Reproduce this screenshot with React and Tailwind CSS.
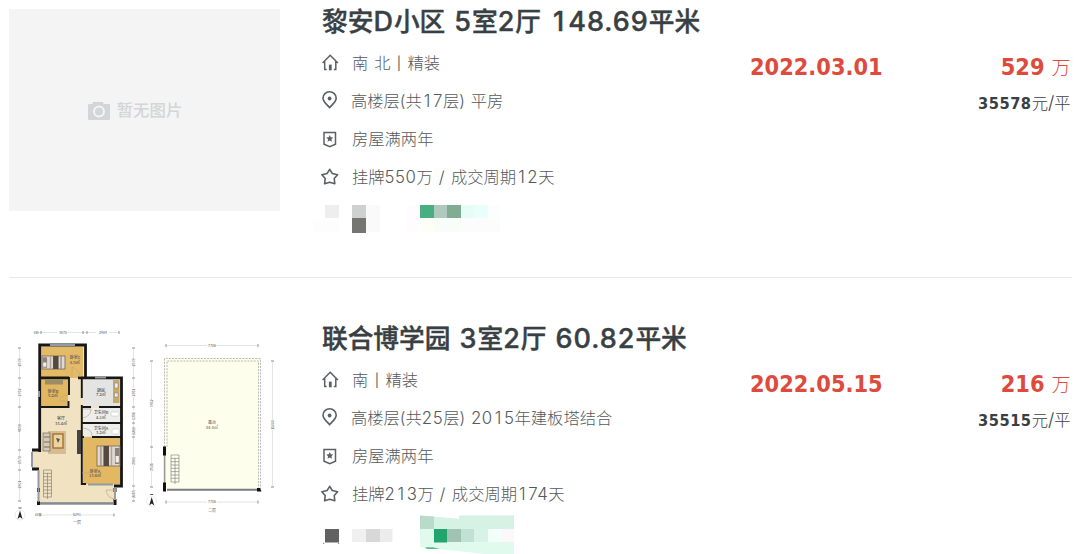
const HomeIcon = () => (
  <svg viewBox="0 0 17 17" className="-mt-[2px] h-[17px] w-[17px]" fill="none" stroke="#5a6165" strokeWidth="1.5">
    <path d="M0.6 9 8.2 1.2 15.900 9M2.700 7.500V15.600H4.700M13.800 7.500V15.600H11.800" />
    <path d="M8.300 10.600V16.300" strokeWidth="2.800" />
  </svg>
);

const PinIcon = () => (
  <svg viewBox="0 0 17 18" className="-mt-[2px] h-[18px] w-[17px]" fill="none" stroke="#5a6165" strokeWidth="1.6">
    <path d="M7.600 16.600C4.300 13 1 10.600 1 7.200a6.600 6.400 0 0 1 13.200 0C14.200 10.600 10.900 13 7.600 16.600Z" />
    <circle cx="7.600" cy="7.500" r="1.900" fill="#5a6165" stroke="none" />
  </svg>
);

const BadgeIcon = () => (
  <svg viewBox="0 0 17 17" className="h-[17px] w-[17px]" fill="none" stroke="#5a6165" strokeWidth="1.5">
    <path d="M2 1.500H13.500V13.200L7.750 15.700 2 13.200Z" />
    <path d="m7.750 4 1.050 2.300 2.500.3-1.850 1.700.5 2.500-2.200-1.250-2.200 1.250.5-2.500-1.850-1.700 2.500-.3Z" fill="#5a6165" stroke="none" />
  </svg>
);

const StarIcon = () => (
  <svg viewBox="0 0 18 17" className="-ml-px -mt-px h-[17px] w-[18px]" fill="none" stroke="#5a6165" strokeWidth="1.6" strokeLinejoin="round">
    <path d="M8.700 1.300 11.300 5.500 16.600 6.700 13.200 10.500 13.800 15.700 8.700 14.200 3.600 15.700 4.200 10.500 0.900 6.700 6.100 5.500Z" />
  </svg>
);

const icons = [HomeIcon, PinIcon, BadgeIcon, StarIcon];

const Placeholder = () => (
  <div className="flex h-[202px] w-[271px] shrink-0 items-center justify-center gap-[7px] bg-[#f4f4f4] pr-[19px] pt-px text-[#d3d6d6]">
    <svg viewBox="0 0 22 18" className="h-[18px] w-[22px]">
      <path d="M0 3Q0 2 1 2H4.500V0.800Q4.500 0 5.300 0H14.700Q15.500 0 15.500 0.800V2H21Q22 2 22 3V17Q22 18 21 18H1Q0 18 0 17Z" fill="currentColor" />
      <circle cx="11" cy="9.500" r="5" fill="none" stroke="#f4f4f4" strokeWidth="2" />
    </svg>
    <span className="text-[16.400px] font-medium leading-none">暂无图片</span>
  </div>
);

const Dim = ({ x, y, children, r = 0, size = 4 }) => (
  <text x={x} y={y} fontSize={size} textAnchor="middle" fill="#555" transform={r ? `rotate(${r} ${x} ${y})` : undefined}>
    {children}
  </text>
);

const Compass = ({ x, y }) => (
  <g transform={`translate(${x} ${y})`}>
    <circle r="5" fill="none" stroke="#d8d8d8" strokeWidth=".5" />
    <path d="M0-4.500 2.500 4 0 2-2.500 4Z" fill="#222" />
    <path d="M-1.500-7H1.500" stroke="#555" />
  </g>
);

const Stairs = ({ x, y }) => (
  <g transform={`translate(${x} ${y})`} fill="none" stroke="#777" strokeWidth=".6">
    <path d="M0 0H8V27H0ZM0 3.400H8M0 6.700H8M0 10H8M0 13.300H8M0 16.600H8M0 20H8M0 23.300H8M4 3V29" />
  </g>
);

const Bed = ({ x, y, w, h, flip }) => (
  <g transform={flip ? `translate(${x + w} ${y}) scale(-1 1)` : `translate(${x} ${y})`}>
    <rect width={w} height={h} fill="#ded9d5" stroke="#675548" strokeWidth=".7" />
    <rect x={w * 0.02} y={h * 0.1} width={w * 0.2} height={h * 0.8} fill="#8d8178" />
    <rect x={w * 0.05} y={h * 0.5} width={w * 0.14} height={h * 0.32} fill="#f1efec" />
    <rect x={w * 0.48} width={w * 0.24} height={h} fill="#54483f" />
    <rect x={w * 0.34} width={w * 0.06} height={h} fill="#b0a294" />
    <rect x={w * 0.8} width={w * 0.06} height={h} fill="#a08f82" />
  </g>
);

const FloorPlan = () => (
  <svg viewBox="9 326 271 202" className="h-[202px] w-[271px] shrink-0 font-['Noto_Sans_CJK_SC',sans-serif]">
    <path d="M39 345H84V379H121V485H115V502H38V470H32V450H39Z" fill="#f1e3c2" />
    <rect x="41" y="347" width="42" height="31" fill="#e3ba66" />
    <rect x="41" y="379" width="27" height="27" fill="#e1b762" />
    <rect x="83" y="379" width="37" height="27" fill="#e4e4e3" />
    <rect x="83" y="408" width="37" height="28" fill="#ededeb" />
    <rect x="83" y="437" width="37" height="47" fill="#e2b863" />
    <g fill="none" stroke="#171717" strokeWidth="2.800">
      <path d="M39.700 452V345H85.500V378M39 377.800H69M78 377.800H121.500V486H114" />
      <path d="M69 377V395M68.500 401V407H41M81.800 377V398M81.800 405V437.500M81.800 407H91M99 407H121M81.800 423H121M82 437H84M92 437H121M81.800 437V484H86" strokeWidth="1.900" />
      <path d="M39.700 450H32M32 469H39M38.500 488V492M38.500 501V505M115 488V492M115 499V505" strokeWidth="3" />
    </g>
    <path d="M50 345H75M95 377.500H106M39 391V397M32 452V467M38.500 470V502M40 503H113M115 488V500M88 484.500H113" fill="none" stroke="#919ca1" strokeWidth="2" />
    <path d="M40 504.200H113" stroke="#555" strokeWidth=".7" />
    <path d="M72 377V367Q79 369 80 377M68 395Q61 395 60 401H68M83 409H91Q91 416 83 418M83 428Q92 429 92 436M82 473H89M106 490H115V499Q107 498 106 490" fill="none" stroke="#baab89" strokeWidth=".7" />
    <Bed x={42} y={356} w={23} h={13} />
    <Bed x={97} y={446} w={23} h={20} flip />
    <rect x="45" y="379.500" width="18" height="5" fill="#9c8d67" />
    <rect x="113" y="380" width="6.500" height="23" fill="#c9a968" />
    <path d="M114.500 383h3.500v5h-3.500zM114.500 393h3.500v4h-3.500z" fill="#eee" stroke="#777" strokeWidth=".5" />
    <rect x="77" y="430" width="4" height="24" fill="#444" />
    <rect x="48" y="431" width="18" height="23" fill="#d5bc95" />
    <rect x="43" y="433" width="7" height="18" fill="#d5cab4" stroke="#756652" strokeWidth=".7" />
    <path d="M44 437H50M44 442H50M44 447H50" stroke="#5f5548" strokeWidth=".8" />
    <rect x="53" y="434" width="10" height="14" fill="#ead5a0" stroke="#a6712f" strokeWidth="1.400" />
    <path d="m56 438 4 1-2 4Z" fill="#555" />
    <rect x="111" y="412" width="8" height="4" rx="1" fill="#fff" stroke="#bbb" strokeWidth=".5" />
    <rect x="112" y="429" width="7" height="5" rx="1.500" fill="#fff" stroke="#bbb" strokeWidth=".5" />
    <Stairs x="43.500" y="470" />
    <g fontWeight="500">
      <Dim x="75" y="359">卧室C</Dim><Dim x="75" y="363.500">8.5㎡</Dim>
      <Dim x="53" y="392.500">卧室B</Dim><Dim x="53" y="397">5.2㎡</Dim>
      <Dim x="101" y="391.500">厨房</Dim><Dim x="101" y="396">7.2㎡</Dim>
      <Dim x="61" y="420">客厅</Dim><Dim x="61" y="424.500">33.4㎡</Dim>
      <Dim x="101" y="414">卫生间B</Dim><Dim x="101" y="418.500">4.1㎡</Dim>
      <Dim x="101" y="429.500">卫生间A</Dim><Dim x="101" y="434">3.2㎡</Dim>
      <Dim x="95" y="472.500">卧室A</Dim><Dim x="95" y="477">13.6㎡</Dim>
    </g>
    <path d="M36 332.500H57M68 332.500H96M109 332.500H119M19.500 348V359M19.500 366V388M19.500 397V424M19.500 432V457M19.500 463V481M19.500 488V501M133.500 348V359M133.500 366V388M133.500 397V411M133.500 420V457M133.500 465V490M133.500 496V501M36 515H73M81 515H114" stroke="#d2d2d2" strokeWidth=".6" />
    <path d="M41 331v3M83 331v3M87 331v3M119 331v3M18 348h3M18 378h3M18 407h3M18 450h3M18 470h3M18 501h3M132 348h3M132 378h3M132 407h3M132 423h3M132 437h3M132 486h3M132 501h3M40 513.500v3M114 513.500v3" stroke="#777" strokeWidth=".8" />
    <Dim x="36" y="333.800" size="3">550</Dim><Dim x="63" y="333.800" size="3.500">3675</Dim><Dim x="103" y="333.800" size="3.500">2984</Dim>
    <Dim x="20.500" y="362.500" r={-90} size="3.500">2578</Dim><Dim x="20.500" y="392.500" r={-90} size="3.500">2762</Dim><Dim x="20.500" y="428" r={-90} size="3.500">4658</Dim><Dim x="20.500" y="460" r={-90} size="3.500">1570</Dim><Dim x="20.500" y="484.500" r={-90} size="3.500">2801</Dim>
    <Dim x="134.500" y="362.500" r={-90} size="3.500">2578</Dim><Dim x="134.500" y="392.500" r={-90} size="3.500">2361</Dim><Dim x="134.500" y="416" r={-90} size="3.500">1396</Dim><Dim x="134.500" y="431" r={-90} size="3.500">1211</Dim><Dim x="134.500" y="461" r={-90} size="3.500">3981</Dim><Dim x="134.500" y="494" r={-90} size="3.500">2065</Dim>
    <Dim x="38" y="516.200" size="3">1570</Dim><Dim x="77" y="516.200" size="3.500">6291</Dim>
    <Dim x="77" y="524">一层</Dim>
    <Compass x={20} y={515} />

    <rect x="164" y="357" width="96" height="133" fill="#fefeec" />
    <path d="M164.500 447V358.500H260.500V489M167 447V361H258.500V489" fill="none" stroke="#a9a9a9" strokeWidth=".8" strokeDasharray="2 1.200" />
    <path d="M167 489.800H258" stroke="#777d80" strokeWidth="2" />
    <path d="M164.600 455V483" stroke="#999" strokeWidth="1.600" />
    <path d="M163 446.500h3v9h-3zM163 482.500h3v9h-3zM257 488h3l1.500 3.500h-4.500z" fill="#111" />
    <Stairs x="171" y="455" />
    <Dim x="212" y="423.500">露台</Dim><Dim x="212" y="428.500">84.8㎡</Dim>
    <path d="M166 345.500H207M217 345.500H258M151.500 361V400M151.500 408V463M151.500 471V487M272.500 361V420M272.500 430V487M166 502H207M217 502H258" stroke="#d2d2d2" strokeWidth=".6" />
    <path d="M166 344v3M258 344v3M150 361h3M150 447h3M150 487h3M271 361h3M271 487h3M166 500.500v3M258 500.500v3" stroke="#777" strokeWidth=".8" />
    <Dim x="212" y="346.700" size="3.500">7706</Dim><Dim x="212" y="503.200" size="3.500">7706</Dim>
    <Dim x="152.500" y="403.500" r={-90} size="3.500">7862</Dim><Dim x="152.500" y="467" r={-90} size="3.500">3536</Dim><Dim x="273.500" y="425" r={-90} size="3.500">11000</Dim>
    <Dim x="212" y="511.500">二层</Dim>
    <Compass x={151.700} y={501.500} />
  </svg>
);

const TagsA = () => (
  <svg viewBox="310 196 200 40" className="h-[40px] w-[200px]" shapeRendering="crispEdges">
    <path d="M325 205h14v13h-14z" fill="#eee" />
    <path d="M352 205h14v13h-14z" fill="#ced1d0" />
    <path d="M366 205h14v27h-14z" fill="#fafafa" />
    <path d="M352 218h14v15h-14z" fill="#757674" />
    <path d="M313 219h26v13h-26z" fill="#fdfdfd" />
    <path d="M407 205h12v27h-12z" fill="#fefcfe" />
    <path d="M420 205h14v13h-14z" fill="#4aae83" />
    <path d="M434 205h13v13h-13z" fill="#aecabd" />
    <path d="M447 205h14v13h-14z" fill="#80ac93" />
    <path d="M461 205h13v13h-13z" fill="#e6fdf6" />
    <path d="M474 205h14v13h-14z" fill="#e9fffa" />
    <path d="M488 205h12v13h-12z" fill="#fafffe" />
    <path d="M420 218h14v14h-14z" fill="#fdfff7" />
    <path d="M434 218h27v14h-27z" fill="#f8fdfa" />
    <path d="M461 218h39v14h-39z" fill="#fbfcfb" />
  </svg>
);

const TagsB = () => (
  <svg viewBox="310 513 210 42" className="h-[42px] w-[210px]">
    <path d="M325 529h14v13.500h-14z" fill="#626262" />
    <path d="M323 543.300h1.200M338 543.300h1.200" stroke="#777" />
    <path d="M352 529h14v13h-14z" fill="#f0f0f0" />
    <path d="M366 529h14v13h-14z" fill="#d8d8d8" />
    <path d="M380 529h12.500v13h-12.500z" fill="#ececec" />
    <path d="M420 515.500 459 519V515.500H514V554H485L420 547Z" fill="#e0faed" />
    <path d="M434 516.700 459 519V515.500H514V529H434Z" fill="#d6f2e5" />
    <path d="M420 515.500 434 516.500V529H420Z" fill="#b9dbca" />
    <path d="M420 529h14v13h-14z" fill="#e0fbee" />
    <path d="M434 529h13v13.500h-13z" fill="#21a46d" />
    <path d="M447 529h14v13h-14z" fill="#a0c3b3" />
    <path d="M461 529h13v13h-13z" fill="#c1e2d2" />
    <path d="M474 529h14v13h-14z" fill="#d9f2e7" />
    <path d="M488 529h13v13h-13z" fill="#f3fffb" />
    <path d="M501 529h13v13h-13z" fill="#fcf8f9" />
    <path d="M425 547.200H433L440 549H427Z" fill="#57bd8d" />
  </svg>
);

// Numerals are set slightly larger and wider than the surrounding Han text,
// and every "1" takes the full width of a digit.
const Mixed = ({ text, numeral }) =>
  text.split(/([02-9.A-Z/]+|1|\|)/).map((part, i) => {
    if (part === "|") return <span key={i} className="relative -top-px mx-[0.500px] text-[13px] font-normal">|</span>;
    if (part === "1") return <span key={i} className={numeral}><span className="inline-block w-[0.67em] text-center">1</span></span>;
    return i % 2 ? <span key={i} className={numeral}>{part}</span> : part;
  });

const listings = [
  {
    title: "黎安D小区 5室2厅 148.69平米",
    info: ["南 北 | 精装", "高楼层(共17层) 平房", "房屋满两年", "挂牌550万 / 成交周期12天"],
    date: "2022.03.01",
    price: "529",
    unit: "35578",
    Picture: Placeholder,
    Tags: TagsA,
    frame: "h-[278px] pt-[9px] border-b border-[#e8e8e8]",
  },
  {
    title: "联合博学园 3室2厅 60.82平米",
    info: ["南 | 精装", "高楼层(共25层) 2015年建板塔结合", "房屋满两年", "挂牌213万 / 成交周期174天"],
    date: "2022.05.15",
    price: "216",
    unit: "35515",
    Picture: FloorPlan,
    Tags: TagsB,
    frame: "h-[276px] pt-[48px]",
  },
];

const Listing = ({ title, info, date, price, unit, Picture, Tags, frame }) => (
  <article className={`flex items-start ${frame}`}>
    <Picture />
    <div className="ml-[42px] w-[428px] shrink-0">
      <h2 className="-mt-1 h-[34px] whitespace-nowrap text-[25.700px] font-medium leading-[34px] text-[#394043] [-webkit-text-stroke:0.400px_#394043] [word-spacing:2.200px]">
        <Mixed text={title} numeral="text-[27px] leading-none tracking-[1px]" />
      </h2>
      <ul className="mt-[5px]">
        {info.map((line, i) => {
          const Icon = icons[i];
          return (
            <li key={i} className="flex h-[38px] items-center whitespace-nowrap text-[16.300px] font-light leading-none text-[#54595c] [word-spacing:1.300px]">
              <span className={i === 1 ? "w-[29px]" : "w-[30px]"}><Icon /></span>
              <span>
                <Mixed text={line} numeral="text-[16.800px] tracking-[0.550px]" />
              </span>
            </li>
          );
        })}
      </ul>
      <div className="-ml-3"><Tags /></div>
    </div>
    <time className="mt-[45px] w-[150px] shrink-0 font-['DejaVu_Sans_Condensed','DejaVu_Sans',sans-serif] text-[23.300px] font-bold leading-[26px] text-[#de4b3d]">{date}</time>
    <div className="ml-auto mr-[1.500px] mt-[45px] whitespace-nowrap text-right">
      <p className="text-[#de4b3d] leading-[26px]">
        <span className="mr-[7px] font-['DejaVu_Sans_Condensed','DejaVu_Sans',sans-serif] text-[23.300px] font-bold">{price}</span>
        <span className="text-[19px] font-light">万</span>
      </p>
      <p className="mt-[9px] text-[16.300px] font-light leading-[24px] text-[#394043]">
        <span className="font-['DejaVu_Sans_Condensed','DejaVu_Sans',sans-serif] text-[16.300px] font-bold tracking-[0.550px]">{unit}</span>元<span className="text-[18px]">/</span>平
      </p>
    </div>
  </article>
);

export default function App() {
  return (
    <main className="h-[554px] w-[1080px] overflow-hidden bg-white pl-[9px] pr-[8px] font-[Inter,'Noto_Sans_CJK_SC',sans-serif]">
      {listings.map((listing) => (
        <Listing key={listing.title} {...listing} />
      ))}
    </main>
  );
}
